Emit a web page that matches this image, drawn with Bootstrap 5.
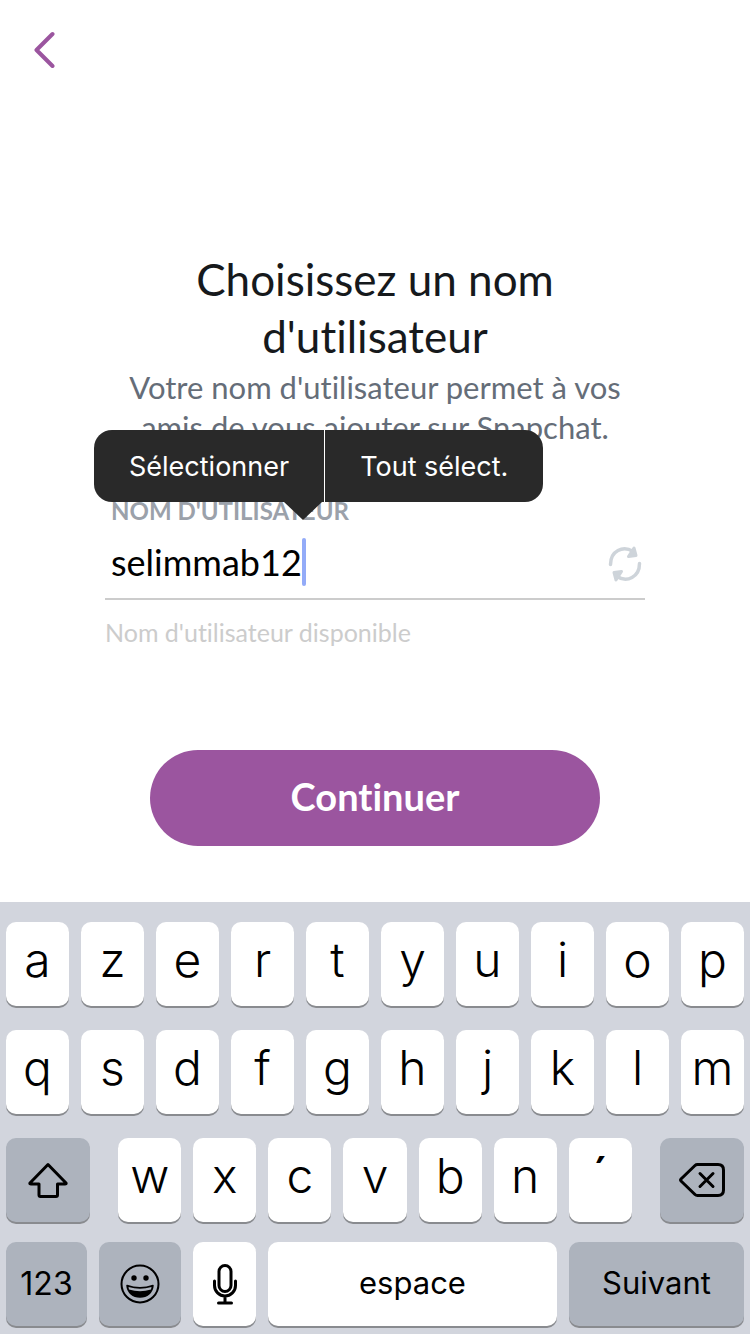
<!DOCTYPE html>
<html lang="fr">
<head>
<meta charset="utf-8">
<meta name="viewport" content="width=device-width, initial-scale=1">
<title>Choisissez un nom d'utilisateur</title>
<link href="https://cdn.jsdelivr.net/npm/bootstrap@5.3.0/dist/css/bootstrap.min.css" rel="stylesheet">
<style>
  body { font-family: Lato, "Open Sans", sans-serif; background: #fff; color: #16191c; }
  body, button { font-variant-ligatures: none; }
  .back-link { color: #9b559f; padding: 30px 32px 0; line-height: 1; }
  .signup { width: 72%; padding-top: 183px; }
  .signup-title { font-size: 44px; line-height: 57px; font-weight: 400; }
  .signup-text { font-size: 31px; line-height: 40px; color: #656d78; margin-top: 2px; }
  .field-label { font-size: 24px; line-height: 31px; font-weight: 700; color: #9ba1aa; padding-left: 6px; text-transform: uppercase; }
  .field-row { border-bottom: 2px solid #ccc; height: 74px; margin-bottom: 13px; }
  .name-input, .name-input:focus { font-size: 36px; line-height: 48px; color: #000; padding: 0 6px; background: none; border: 0; box-shadow: none; }
  .caret { left: 197px; top: 12px; width: 4px; height: 48px; border-radius: 2px; background: #93abf8; }
  .refresh-btn { width: 40px; height: 40px; color: #ced4da; }
  .refresh-btn svg { display: block; overflow: visible; }
  .hint { font-size: 25px; line-height: 38px; color: #ccc; }
  .btn-next { width: 60%; height: 96px; border-radius: 48px; background: #9b559f; color: #fff; font-size: 38px; font-weight: 700; padding: 0 0 4px; margin-top: 99px; margin-bottom: 56px; }
  .btn-next:hover { background: #8a498e; color: #fff; }

  .edit-menu { left: -11px; bottom: calc(100% - 7px); border-radius: 18px; background: #292929; font-family: Inter, sans-serif; z-index: 2; }
  .edit-menu::after { content: ""; position: absolute; left: 190px; top: 100%; border: 19px solid transparent; border-top: 18px solid #292929; border-bottom: 0; }
  .edit-menu button { height: 72px; padding: 2px 35px 0; font-size: 27px; color: #fff; background: none; border: 0; white-space: nowrap; }
  .edit-menu button + button { border-left: 1px solid #fff; }

  .keyboard { background: #d2d5dd; padding: 20px 6px 8px; font-family: Inter, "Liberation Sans", sans-serif; }
  .key-row { display: flex; gap: 12px; margin-bottom: 24px; }
  .key-row.third { margin-bottom: 20px; }
  .key-row.last { margin-bottom: 0; }
  .key { flex: 63 1 0; min-width: 0; height: 84px; border: 0; border-radius: 10px; background: #fff; box-shadow: 0 2px 0 #898b8f; color: #000; padding: 0 0 8px; font-size: 48px; font-weight: 300; display: flex; align-items: center; justify-content: center; }
  .key.word { font-size: 31px; font-weight: 400; padding: 0 0 2px; }
  .key.dark { background: #adb3bd; }
  .key.icon-key { padding: 0; }
  .key.accent { font-weight: 500; }
  .key.side { flex-grow: 84; }
  .key.side.start { margin-right: 16px; }
  .key.side.end { margin-left: 16px; }
  .key.medium { flex-grow: 82; }
  .key.digits { flex-grow: 81; font-size: 32px; padding: 0; }
  .key.space { flex-grow: 289; }
  .key.next { flex-grow: 175; }
  .key svg { display: block; flex: none; }
</style>
</head>
<body>
<div class="min-vh-100 d-flex flex-column">
  <header class="d-flex">
    <a href="#" class="back-link" aria-label="Retour">
      <svg width="24" height="38" viewBox="0 0 24 38" fill="none" stroke="currentColor" stroke-width="4" stroke-linecap="round" stroke-linejoin="round"><path d="M20.500 4 4.500 20 20.500 36"/></svg>
    </a>
  </header>

  <main class="signup mx-auto">
    <div class="text-center">
      <h1 class="signup-title mb-0 mx-auto">Choisissez un nom d'utilisateur</h1>
      <p class="signup-text mb-0">Votre nom d'utilisateur permet à vos amis de vous ajouter sur Snapchat.</p>
    </div>
    <form class="mt-5 position-relative">
      <div class="edit-menu position-absolute d-flex" role="menu">
        <button type="button" role="menuitem">Sélectionner</button>
        <button type="button" role="menuitem">Tout sélect.</button>
      </div>
      <label class="field-label d-block" for="username">Nom d'utilisateur</label>
      <div class="field-row position-relative d-flex align-items-center">
        <input class="name-input form-control flex-grow-1" id="username" type="text" value="selimmab12" autocomplete="off">
        <span class="caret position-absolute"></span>
        <button type="button" class="refresh-btn btn p-0 border-0 flex-shrink-0" aria-label="Proposer un autre nom">
          <svg width="40" height="40" viewBox="0 -2 40 40"><g fill="none" stroke="currentColor" stroke-width="3.500" stroke-linecap="round"><path d="M5.500 20.500C5.500 7 18 1 28 7.500"/><path d="M34.500 19.500C34.500 33 22 39 12 32.500"/></g><g fill="currentColor" stroke="currentColor" stroke-width="3" stroke-linejoin="round"><path d="M29 4 31 11.500 23.500 12.500Z"/><path d="M11 36 9 28.500 16.500 27.500Z"/></g></svg>
        </button>
      </div>
      <div class="hint">Nom d'utilisateur disponible</div>
    </form>
  </main>
  <button type="button" class="btn-next btn border-0 mx-auto">Continuer</button>

  <section class="keyboard mt-auto" aria-label="Clavier">
    <div class="key-row">
      <button class="key">a</button><button class="key">z</button><button class="key">e</button><button class="key">r</button><button class="key">t</button><button class="key">y</button><button class="key">u</button><button class="key">i</button><button class="key">o</button><button class="key">p</button>
    </div>
    <div class="key-row">
      <button class="key">q</button><button class="key">s</button><button class="key">d</button><button class="key">f</button><button class="key">g</button><button class="key">h</button><button class="key">j</button><button class="key">k</button><button class="key">l</button><button class="key">m</button>
    </div>
    <div class="key-row third">
      <button class="key dark icon-key side start" aria-label="Majuscule">
        <svg width="40" height="36" viewBox="0 0 40 36" fill="none" stroke="#000" stroke-width="3" stroke-linejoin="round"><path d="M20 2.500 38 21q.5 1-1 1h-7.500v11q0 1.500-1.500 1.500H12.500q-1.500 0-1.500-1.500V22H3q-1.500 0-1-1Z"/></svg>
      </button>
      <button class="key">w</button><button class="key">x</button><button class="key">c</button><button class="key">v</button><button class="key">b</button><button class="key">n</button><button class="key accent">´</button>
      <button class="key dark icon-key side end" aria-label="Effacer">
        <svg width="48" height="36" viewBox="0 0 48 36" fill="none" stroke="#000" stroke-width="3" stroke-linecap="round" stroke-linejoin="round"><path d="M19.500 2.500H40q5.500 0 5.500 5.500v20q0 5.500-5.500 5.500H19.500q-1.500 0-2.500-1L3 19q-1-1 0-2L17 3.500q1-1 2.500-1Z"/><path d="M22 11.500 35 24.500M35 11.500 22 24.500"/></svg>
      </button>
    </div>
    <div class="key-row last">
      <button class="key dark word digits">123</button>
      <button class="key dark icon-key medium" aria-label="Emoji">
        <svg width="40" height="40" viewBox="0 0 40 40"><circle cx="20" cy="20" r="18.500" fill="none" stroke="#000" stroke-width="2"/><circle cx="14" cy="14" r="2.700"/><circle cx="26" cy="14" r="2.700"/><path d="M7 21.500Q20 26 33 21.500C32.500 28.500 27 33 20 33S7.500 28.500 7 21.500Z" fill="#000" stroke="#000" stroke-width="1.500" stroke-linejoin="round"/><path d="M8.500 23Q20 26.500 31.500 23L31 25.500Q20 29 9 25.500Z" fill="#adb3bd"/></svg>
      </button>
      <button class="key icon-key" aria-label="Dictée">
        <svg width="26" height="42" viewBox="0 0 26 42" fill="none" stroke="#000" stroke-width="3" stroke-linecap="round"><rect x="7" y="2.500" width="12" height="26" rx="6"/><path d="M2.500 18v4.500a10.500 10.500 0 0 0 21 0V18M13 33v6M6.500 40h13"/></svg>
      </button>
      <button class="key word space">espace</button>
      <button class="key dark word next">Suivant</button>
    </div>
  </section>
</div>
<script src="https://cdn.jsdelivr.net/npm/bootstrap@5.3.0/dist/js/bootstrap.bundle.min.js"></script>
</body>
</html>
